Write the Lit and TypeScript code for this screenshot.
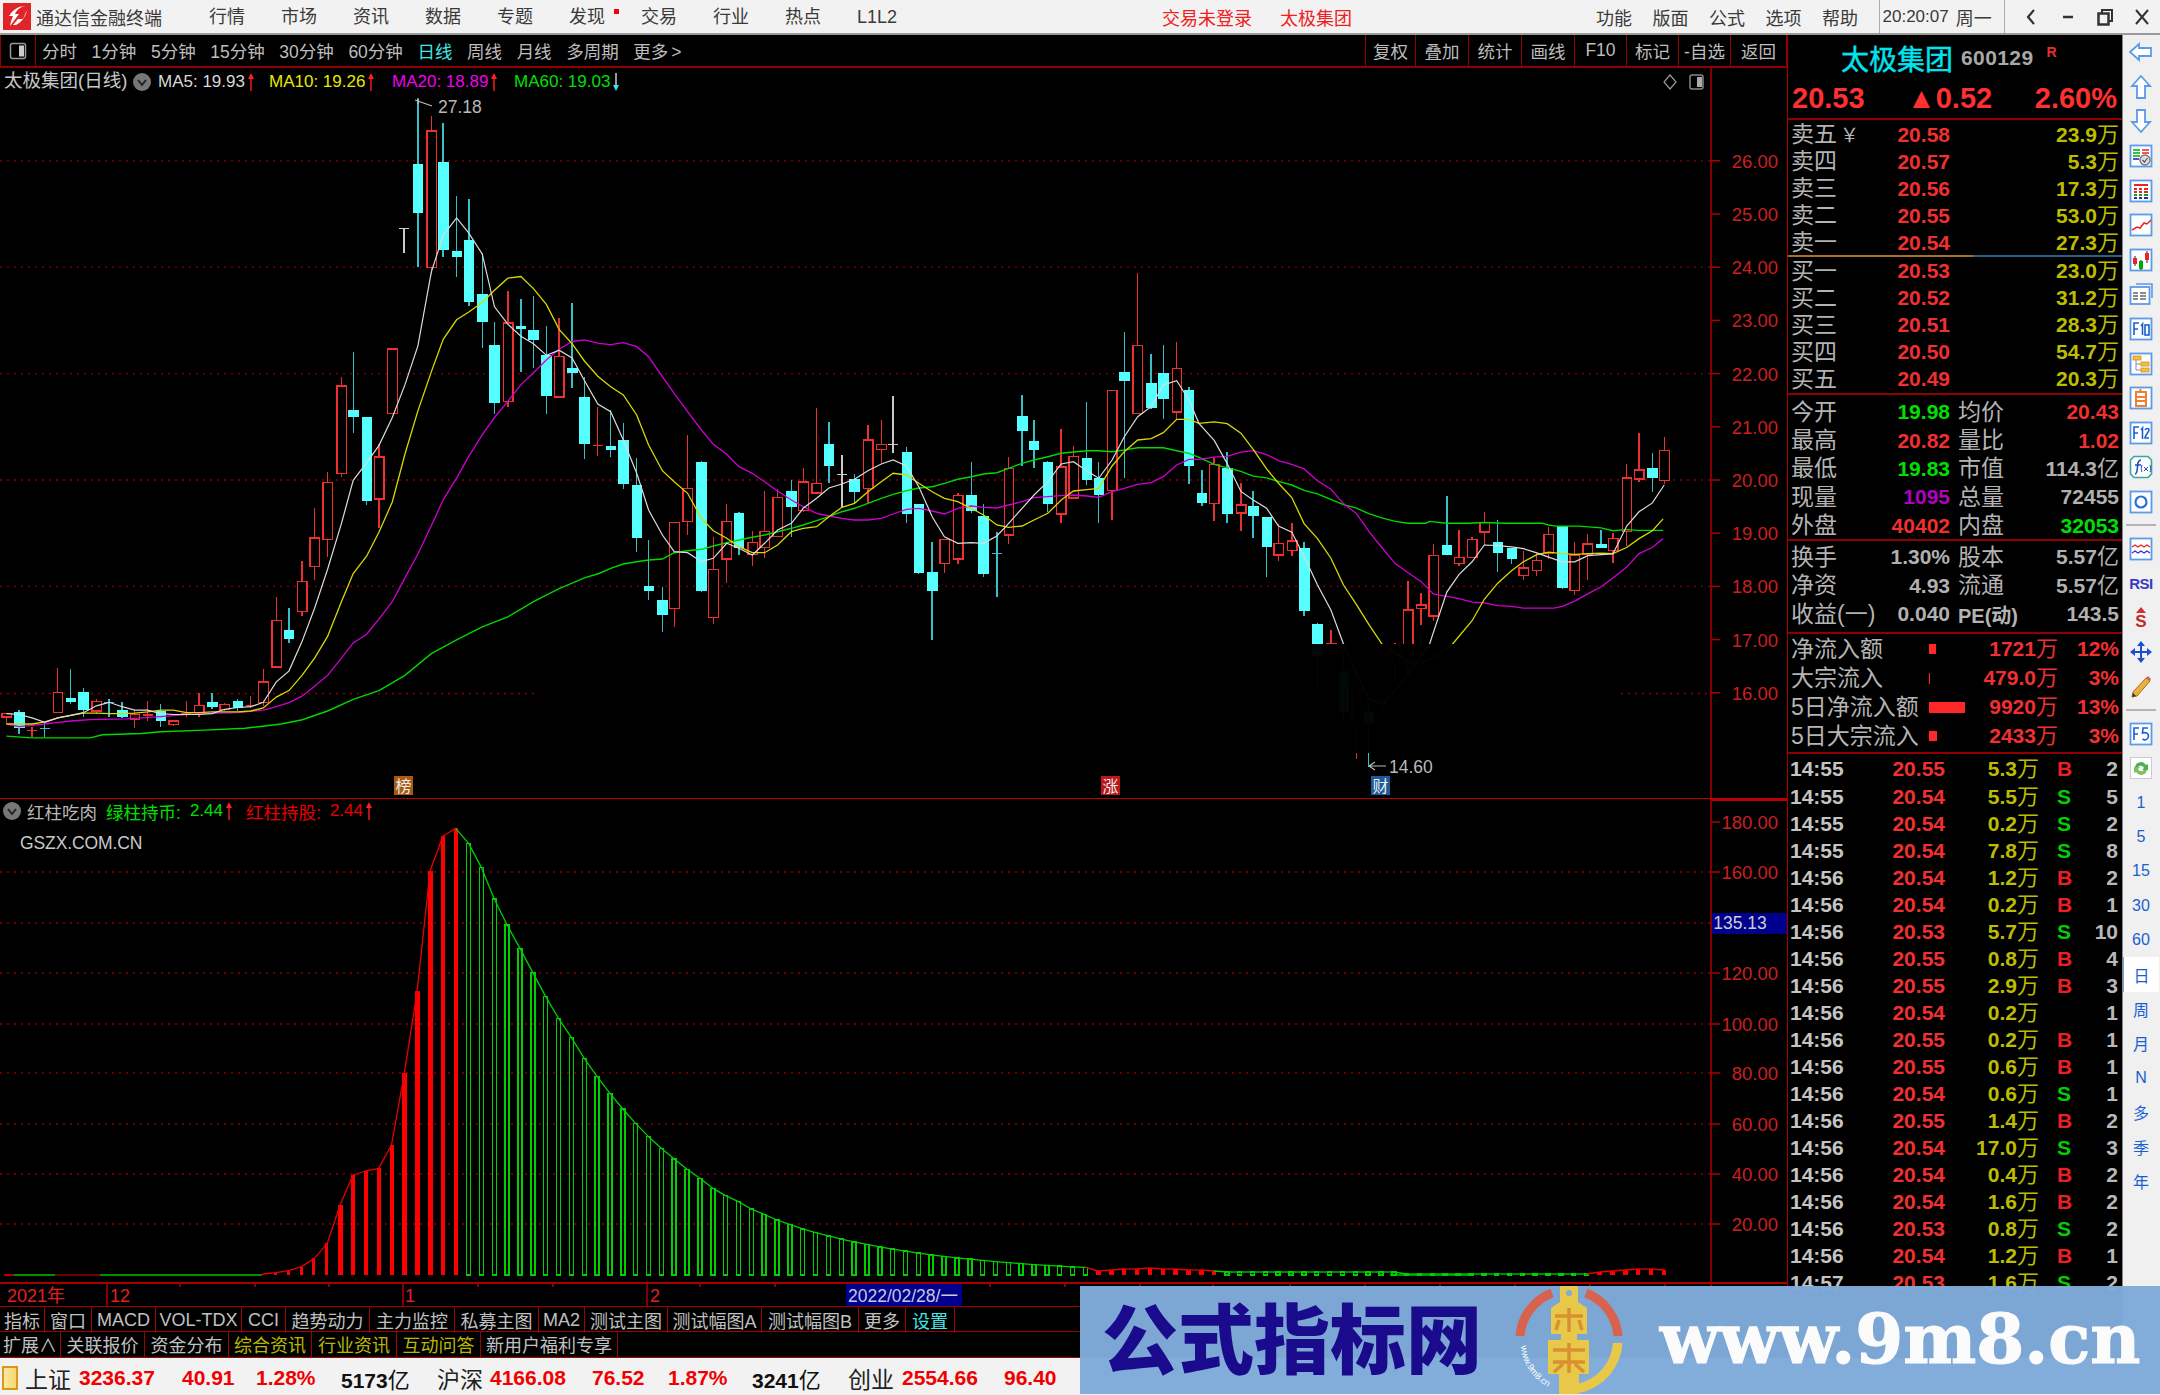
import { LitElement, html, css, svg } from "lit";
import { customElement } from "lit/decorators.js";

type C = [number, number, number, number, number, string];
const RED = "r", CY = "c", GR = "g";

const z7 = (x: number) => x / 2.613;
const y7 = (y: number) => 90 + y / 2.306;
const z8 = (x: number) => 600 + x / 2.613;
const y8 = (y: number) => 260 + y / 3;
const z9 = (x: number) => 1200 + x / 2.613;
const y9 = (y: number) => 260 + y / 2.8;

const c7: C[] = [
  [17,1438,1438,1446,1462,RED],[50,1430,1434,1472,1484,CY],[84,1468,1474,1476,1492,RED],[117,1460,1470,1472,1492,CY],
  [151,1332,1389,1435,1435,RED],[185,1336,1402,1412,1415,CY],[218,1378,1388,1430,1445,CY],[252,1405,1410,1432,1440,RED],
  [285,1405,1410,1416,1445,CY],[319,1412,1430,1446,1448,CY],[352,1430,1440,1452,1472,RED],[386,1410,1439,1441,1455,RED],
  [420,1415,1432,1455,1470,CY],[453,1453,1455,1463,1466,RED],[487,1410,1436,1438,1445,RED],[520,1390,1420,1436,1445,RED],
  [554,1390,1412,1422,1428,CY],[587,1414,1417,1428,1432,RED],[621,1404,1410,1424,1432,CY],[655,1398,1417,1419,1425,RED],
  [688,1336,1365,1412,1420,RED],[722,1170,1223,1331,1334,RED],[755,1194,1246,1266,1276,CY],[789,1087,1133,1203,1214,RED],
  [822,963,1033,1099,1131,RED],[856,880,905,1036,1076,RED],[892,661,683,885,892,RED],[923,605,737,753,792,CY],
  [958,755,755,948,958,CY],[990,817,846,943,1010,RED],[1025,597,597,746,746,RED],[1056,320,320,321,375,GR],
  [1092,20,170,283,408,CY],[1127,60,95,410,425,RED],[1158,77,167,370,385,CY],[1193,245,371,384,432,CY],
  [1225,252,347,490,498,CY],[1260,375,471,535,595,CY],[1292,534,589,722,747,CY],[1327,463,537,718,732,RED],
  [1361,482,544,552,650,CY],[1394,474,554,577,640,CY],[1428,544,612,705,747,CY],[1461,526,614,708,708,RED],
  [1495,492,641,653,688,CY],[1527,662,707,816,850,CY],[1562,731,817,819,845,RED],
];
const c8: C[] = [
  [28,450,557,569,592,CY],[61,490,540,673,687,CY],[96,593,675,835,876,CY],[127,840,977,993,1020,CY],[163,980,1021,1065,1115,CY],
  [194,788,788,1045,1100,RED],[229,525,685,784,826,RED],[265,602,607,993,997,CY],[296,830,928,1073,1092,RED],[331,733,784,897,970,RED],
  [363,755,760,865,885,CY],[398,813,848,884,917,RED],[430,693,815,862,893,RED],[464,688,712,830,830,RED],[500,660,692,740,830,CY],
  [531,625,666,752,755,RED],[566,445,671,699,700,RED],[598,485,553,619,670,CY],[632,585,644,646,740,GR],[665,643,656,696,730,CY],
  [700,494,540,686,730,RED],[735,480,553,569,610,RED],[766,408,553,555,580,GR],[801,562,575,763,790,CY],[833,733,733,940,943,CY],
  [868,845,935,993,1140,CY],[900,838,838,910,940,RED],[935,698,707,897,912,RED],[970,606,706,753,760,CY],[1002,733,768,943,952,CY],
  [1037,815,877,879,1012,CY],[1068,590,626,825,853,RED],[1103,404,467,512,618,CY],[1134,480,544,570,623,CY],[1170,603,607,732,755,CY],
  [1205,508,621,762,790,RED],[1237,558,590,714,718,RED],[1272,427,593,660,675,CY],[1303,607,653,705,790,CY],[1338,392,392,692,780,RED],
  [1370,215,337,363,655,CY],[1405,40,257,460,462,RED],[1440,282,368,444,446,CY],[1472,256,338,416,476,CY],[1507,247,325,456,480,RED],
  [1539,382,391,619,672,CY],
];
const c9: C[] = [
  [5,587,652,680,690,CY],[37,553,572,681,730,RED],[71,538,583,712,735,CY],[107,625,686,708,760,RED],[139,647,690,716,777,CY],
  [174,719,719,804,888,CY],[205,740,794,826,843,RED],[240,735,787,813,830,RED],[272,790,805,982,998,CY],[307,1016,1019,1110,1200,CY],
  [342,1037,1075,1100,1120,RED],[375,1100,1150,1265,1290,CY],[409,1150,1200,1300,1396,RED],[441,1240,1265,1300,1420,CY],
  [475,1080,1100,1230,1320,RED],[510,1073,1080,1130,1180,RED],[543,900,980,1125,1160,RED],[577,932,966,976,1022,RED],
  [610,795,828,997,1012,RED],[645,660,798,826,826,CY],[677,755,833,850,856,RED],[711,775,782,833,835,RED],[743,705,735,762,800,RED],
  [778,727,790,820,873,CY],[814,805,805,837,850,CY],[845,815,862,883,897,RED],[880,820,841,870,885,RED],[911,748,769,820,838,RED],
  [947,745,745,918,922,CY],[979,790,826,925,938,RED],[1013,768,795,825,897,RED],[1048,755,794,805,805,CY],[1079,765,780,813,848,RED],
  [1115,570,610,761,800,RED],[1147,483,588,613,622,RED],[1182,541,583,610,650,CY],[1213,495,534,618,628,RED],
];
const candles: { x: number; a: number; b: number; c: number; d: number; t: string }[] = [
  ...c7.map((k) => ({ x: z7(k[0]), a: y7(k[1]), b: y7(k[2]), c: y7(k[3]), d: y7(k[4]), t: k[5] })),
  ...c8.map((k) => ({ x: z8(k[0]), a: y8(k[1]), b: y8(k[2]), c: y8(k[3]), d: y8(k[4]), t: k[5] })),
  ...c9.map((k) => ({ x: z9(k[0]), a: y9(k[1]), b: y9(k[2]), c: y9(k[3]), d: y9(k[4]), t: k[5] })),
];

const line = (a7: number[], a8: number[], a9: number[]) => {
  const out: string[] = [];
  for (let i = 0; i < a7.length; i += 2) out.push(`${z7(a7[i]).toFixed(1)},${y7(a7[i + 1]).toFixed(1)}`);
  for (let i = 0; i < a8.length; i += 2) out.push(`${z8(a8[i]).toFixed(1)},${y8(a8[i + 1]).toFixed(1)}`);
  for (let i = 0; i < a9.length; i += 2) out.push(`${z9(a9[i]).toFixed(1)},${y9(a9[i + 1]).toFixed(1)}`);
  return out.join(" ");
};

const ma5 = line(
  [17,1438,50,1440,84,1448,117,1458,151,1448,185,1442,218,1436,252,1420,285,1412,319,1422,352,1430,386,1430,420,1438,453,1440,487,1440,520,1440,554,1438,587,1428,621,1424,655,1422,688,1412,722,1365,755,1340,789,1272,822,1195,856,1105,892,1000,923,900,958,860,990,820,1025,755,1058,680,1092,590,1127,420,1158,335,1193,295,1225,330,1260,378,1292,500,1327,540,1361,568,1394,585,1428,612,1461,600,1495,618,1527,670,1562,724],
  [28,455,61,540,96,640,127,750,163,825,194,875,229,878,265,905,296,895,331,850,363,865,398,885,430,850,464,810,500,790,531,745,566,715,598,684,632,672,665,658,700,632,735,612,766,600,801,618,833,680,868,770,900,830,935,850,970,848,1002,850,1037,828,1068,790,1103,745,1134,705,1170,665,1205,612,1237,605,1272,632,1303,655,1338,600,1370,530,1405,470,1440,440,1472,375,1507,362,1539,420,1565,490],
  [37,505,71,570,107,648,139,672,174,695,205,745,240,762,272,830,307,910,342,980,375,1075,440,1230,480,1245,540,1165,600,1075,645,930,677,880,711,845,743,798,778,800,814,803,845,808,880,820,911,832,947,845,979,845,1013,828,1048,825,1079,823,1115,745,1147,705,1182,680,1213,630]
);
const ma10 = line(
  [17,1462,50,1462,84,1462,117,1457,151,1448,185,1442,218,1437,252,1437,285,1438,319,1438,352,1437,386,1434,420,1430,453,1430,487,1436,520,1436,554,1434,587,1434,621,1434,655,1432,688,1425,722,1400,755,1385,789,1350,822,1310,856,1260,892,1180,923,1115,958,1075,990,1020,1025,950,1058,840,1092,740,1127,650,1158,575,1193,530,1225,512,1260,490,1292,462,1327,434,1361,430,1394,458,1428,495,1461,552,1495,585,1527,625,1562,660],
  [28,380,61,405,96,465,127,555,163,632,194,665,229,700,265,775,296,812,331,835,363,860,398,878,430,878,464,855,500,815,531,805,566,800,598,770,632,742,665,730,700,695,735,665,766,640,801,645,833,670,868,695,900,715,935,725,970,745,1002,765,1037,795,1068,802,1103,798,1134,780,1170,760,1205,720,1237,693,1272,689,1303,685,1338,618,1370,575,1405,540,1440,536,1472,518,1507,478,1539,478,1565,490],
  [37,453,71,458,107,485,139,530,174,585,205,625,240,665,272,738,307,780,342,835,375,910,409,965,441,1020,475,1075,510,1100,560,1135,610,1115,660,1075,711,1010,743,950,778,905,814,870,845,845,880,825,911,818,947,822,979,824,1013,822,1048,821,1079,822,1115,805,1147,780,1182,758,1210,725]
);
const ma20 = line(
  [17,1462,50,1468,117,1462,151,1458,185,1455,235,1452,330,1450,420,1445,520,1438,621,1436,688,1430,722,1422,755,1413,789,1398,822,1375,856,1350,892,1310,923,1275,958,1255,990,1220,1025,1180,1058,1125,1092,1070,1127,1005,1158,945,1193,895,1225,845,1260,795,1292,755,1327,718,1361,680,1394,652,1428,622,1461,598,1495,580,1527,576,1565,584],
  [28,254,61,248,96,260,127,290,163,350,194,400,229,455,265,510,296,553,331,583,363,620,398,640,430,665,464,693,500,720,531,740,566,760,598,768,632,775,665,780,700,780,735,775,766,762,801,748,833,745,868,753,900,762,935,745,970,738,1002,742,1037,744,1068,735,1103,725,1134,713,1170,710,1205,707,1237,705,1272,708,1303,712,1338,695,1370,685,1405,673,1440,668,1472,650,1507,615,1539,598,1565,598],
  [37,552,71,550,107,538,139,534,174,545,205,562,240,572,272,585,307,618,342,642,375,682,409,710,441,760,475,805,510,850,543,875,577,900,610,935,645,942,677,948,711,958,743,960,778,968,814,970,845,975,880,975,925,975,947,970,979,955,1013,935,1048,915,1079,890,1115,860,1147,822,1182,805,1210,780]
);
const ma60 = line(
  [17,1490,84,1494,235,1494,268,1487,370,1484,420,1480,535,1476,640,1472,735,1462,790,1452,856,1432,923,1405,990,1385,1058,1350,1127,1300,1193,1268,1260,1238,1327,1215,1394,1180,1461,1150,1527,1125,1565,1115],
  [28,925,61,912,96,905,127,900,163,897,194,878,229,872,265,868,296,858,331,848,363,840,398,832,430,825,464,815,500,805,531,795,566,782,598,770,632,755,665,745,700,730,735,715,766,703,801,692,833,684,868,680,900,670,935,658,970,650,1002,642,1037,638,1068,625,1103,610,1134,600,1170,590,1205,580,1237,576,1272,572,1303,572,1338,575,1370,570,1405,563,1440,563,1472,563,1507,572,1539,580,1565,592],
  [37,572,71,582,107,592,139,605,174,610,205,620,240,630,272,645,307,655,342,670,375,685,409,695,441,710,475,722,510,732,543,737,590,737,600,732,645,737,700,737,743,735,800,737,895,737,910,742,930,745,990,745,1048,750,1079,758,1115,755,1147,757,1182,757,1210,757]
);

const BASE = 1274;
const topsZ: Record<number, number> = {
  20:1447,21:1443,22:1437,23:1425,24:1400,25:1355,26:1240,27:1150,28:1138,29:1130,30:1060,31:845,32:597,33:238,34:133,35:110,
  36:155,37:228,38:322,39:400,40:470,41:543,42:615,43:680,44:738,45:800,46:855,47:905,48:952,49:995,50:1035,51:1070,52:1102,53:1133,54:1160,55:1190,56:1212,57:1230,58:1252,59:1268,60:1285,61:1298,
};
const bars: { x: number; top: number; red: boolean }[] = [];
for (let i = 20; i <= 129; i++) {
  const x = 6 + 12.85 * i;
  let h: number;
  let red = i <= 35;
  if (topsZ[i] !== undefined) h = (1450 - topsZ[i]) / 3;
  else if (i <= 84) h = Math.max(3, 50 * Math.pow(0.921, i - 61));
  else if (i <= 94) { h = [4, 5, 6, 6, 7, 6, 6, 5, 5, 4][i - 85]; red = true; }
  else if (i <= 108) h = 3;
  else if (i <= 123) h = 1;
  else { h = [3, 4, 5, 6, 6, 5][i - 124]; red = true; }
  bars.push({ x, top: BASE - h, red });
}

const upAxis = [26, 25, 24, 23, 22, 21, 20, 19, 18, 17, 16];
const lowAxis: [string, number][] = [["180.00",821],["160.00",871],["120.00",972],["100.00",1023],["80.00",1072],["60.00",1123],["40.00",1173],["20.00",1223]];

const sells = [["卖五","20.58","23.9"],["卖四","20.57","5.3"],["卖三","20.56","17.3"],["卖二","20.55","53.0"],["卖一","20.54","27.3"]];
const buys = [["买一","20.53","23.0"],["买二","20.52","31.2"],["买三","20.51","28.3"],["买四","20.50","54.7"],["买五","20.49","20.3"]];
const ticks: string[][] = [
  ["14:55","20.55","5.3","B","2"],["14:55","20.54","5.5","S","5"],["14:55","20.54","0.2","S","2"],["14:55","20.54","7.8","S","8"],
  ["14:56","20.54","1.2","B","2"],["14:56","20.54","0.2","B","1"],["14:56","20.53","5.7","S","10"],["14:56","20.55","0.8","B","4"],
  ["14:56","20.55","2.9","B","3"],["14:56","20.54","0.2","","1"],["14:56","20.55","0.2","B","1"],["14:56","20.55","0.6","B","1"],
  ["14:56","20.54","0.6","S","1"],["14:56","20.55","1.4","B","2"],["14:56","20.54","17.0","S","3"],["14:56","20.54","0.4","B","2"],
  ["14:56","20.54","1.6","B","2"],["14:56","20.53","0.8","S","2"],["14:56","20.54","1.2","B","1"],["14:57","20.53","1.6","S","2"],
];

const up = (c: string) => html`<svg class="arr" viewBox="0 0 8 18"><path d="M4 18V3" stroke="${c}" stroke-width="1.4"/><path d="M1 6 4 0l3 6z" fill="${c}"/></svg>`;
const down = html`<svg class="arr" viewBox="0 0 8 18"><path d="M4 0v14" stroke="#d8d8d8" stroke-width="1.4"/><path d="M1 12l3 6 3-6z" fill="#40e0f0"/></svg>`;
const chev = html`<svg class="chev" viewBox="0 0 18 18"><circle cx="9" cy="9" r="9" fill="#777"/><path d="M5 7l4 5 4-5" fill="none" stroke="#222" stroke-width="2"/></svg>`;

const B = "#5b9bea";
const box = (inner: unknown) => html`<svg class="ic" viewBox="0 0 24 24"><rect x="1.5" y="1.5" width="21" height="21" fill="#fff" stroke="${B}" stroke-width="1.8"/>${inner}</svg>`;
const icons = [
  html`<svg class="ic" viewBox="0 0 24 24"><path d="M1 12 10 4v4h12v8H10v4z" fill="#fff" stroke="${B}" stroke-width="1.8"/></svg>`,
  html`<svg class="ic" viewBox="0 0 24 24"><path d="M12 1l9 10h-5v12H8V11H3z" fill="#fff" stroke="${B}" stroke-width="1.8"/></svg>`,
  html`<svg class="ic" viewBox="0 0 24 24"><path d="M12 23 3 13h5V1h8v12h5z" fill="#fff" stroke="${B}" stroke-width="1.8"/></svg>`,
  box(svg`<path d="M4 6h7M4 9h7M4 12h7" stroke="#0a0" stroke-width="1.6"/><path d="M13 6h7M13 9h7" stroke="#e22" stroke-width="1.6"/><path d="M4 15h6" stroke="#22c" stroke-width="1.6"/><circle cx="16" cy="16" r="5" fill="#ddd" stroke="#777" stroke-width="1.4"/><path d="M13.5 16l2 2 3-4" fill="none" stroke="#555" stroke-width="1.2"/>`),
  box(svg`<path d="M5 6h14" stroke="#e22" stroke-width="2"/><path d="M5 10h3M10 10h3M15 10h4M5 13h3M10 13h3M15 13h4" stroke="#e22" stroke-width="2"/><path d="M5 16h3M10 16h3M15 16h4" stroke="#0a0" stroke-width="2"/><path d="M5 19h3M10 19h3M15 19h4" stroke="#22c" stroke-width="2"/>`),
  box(svg`<path d="M3 17l5-3 3 1 4-5 3 1 4-4" fill="none" stroke="#e22" stroke-width="1.5"/>`),
  box(svg`<path d="M6 8v10M12 12v10M18 3v12" stroke="#222" stroke-width="1"/><rect x="4" y="10" width="4" height="6" fill="#e22"/><rect x="10" y="13" width="4" height="8" fill="#0a0"/><rect x="16" y="5" width="4" height="7" fill="#e22"/>`),
  html`<svg class="ic" viewBox="0 0 24 24"><path d="M7 2h16v14" fill="none" stroke="${B}" stroke-width="1.6"/><rect x="1.5" y="5" width="19" height="17" fill="#fff" stroke="${B}" stroke-width="1.8"/><path d="M4 11h5M11 11h6M4 14h5M11 14h6M4 17h5M11 17h6" stroke="#666" stroke-width="1.3"/></svg>`,
  box(svg`<path d="M5 18V6h5M5 12h4M12 9l1.5-2v11" fill="none" stroke="#1a5fd0" stroke-width="1.6"/><rect x="16" y="8" width="4" height="10" fill="none" stroke="#1a5fd0" stroke-width="1.6"/>`),
  box(svg`<rect x="4" y="4" width="8" height="4" fill="#f0c040" stroke="#d09020" stroke-width=".8"/><path d="M7 8v10h5M7 12h5" fill="none" stroke="#88a" stroke-width="1"/><rect x="12" y="10" width="8" height="4" fill="#f0c040" stroke="#d09020" stroke-width=".8"/><rect x="12" y="16" width="8" height="4" fill="#f0c040" stroke="#d09020" stroke-width=".8"/>`),
  box(svg`<path d="M12 3l-1.5 3H7v14h10V6h-6M7 11h10M7 15h10" fill="none" stroke="#f08030" stroke-width="2"/>`),
  box(svg`<path d="M5 18V6h5M5 12h4M12 9l1.5-2v11" fill="none" stroke="#1a5fd0" stroke-width="1.6"/><path d="M16 9c1-2 4-2 4 0s-4 5-4 8h4" fill="none" stroke="#1a5fd0" stroke-width="1.6"/>`),
  html`<svg class="ic" viewBox="0 0 24 24"><path d="M5 1.5h14L22.5 5v14L19 22.5H5L1.5 19V5z" fill="#fff" stroke="#3aa6a0" stroke-width="1.6"/><path d="M6 19c3 0 2-8 3-11s2-3 3-3M6 10h6" fill="none" stroke="#1a4fc0" stroke-width="1.6"/><path d="M13 10c-1 3-1 5 0 7M21 10c1 3 1 5 0 7M15 12l4 4M19 12l-4 4" fill="none" stroke="#1a4fc0" stroke-width="1"/></svg>`,
  box(svg`<circle cx="12" cy="12" r="5.5" fill="none" stroke="#2a70d8" stroke-width="2.2"/>`),
];
const icons2 = [
  box(svg`<path d="M3 10l3-2 3 2 3-2 3 2 3-2 3 2" fill="none" stroke="#e22" stroke-width="1.4"/><path d="M3 16l3-2 3 2 3-2 3 2 3-2 3 2" fill="none" stroke="#33d" stroke-width="1.4"/>`),
  html`<span class="rsi">RSI</span>`,
  html`<svg class="ic" viewBox="0 0 24 24"><path d="M12 1l5 6H7z" fill="#d43030"/><text x="12" y="21" text-anchor="middle" font-size="17" font-weight="700" fill="#c02828" font-family="Liberation Sans">S</text></svg>`,
  html`<svg class="ic" viewBox="0 0 24 24"><path d="M12 1l4 5h-3v5h5V8l5 4-5 4v-3h-5v5h3l-4 5-4-5h3v-5H6v3l-5-4 5-4v3h5V6H8z" fill="#1a50d0"/></svg>`,
  html`<svg class="ic" viewBox="0 0 24 24"><path d="M4 17 17 3l4 3L8 21l-5 1z" fill="#f0b040" stroke="#a07020" stroke-width="1"/><path d="M17 3l4 3 1-2-3-3z" fill="#d86050"/><path d="M3 22l1-4 3 3z" fill="#333"/></svg>`,
];
const icons3 = [
  box(svg`<path d="M5 18V6h5M5 12h4" fill="none" stroke="#1a5fd0" stroke-width="1.6"/><path d="M19 6h-5l-.5 5c3-1 6 0 6 3s-3 5-6 3" fill="none" stroke="#1a5fd0" stroke-width="1.6"/>`),
  html`<svg class="ic" viewBox="0 0 24 24"><rect x="1.5" y="1.5" width="21" height="21" fill="#fff" stroke="#ccc"/><path d="M6 11a6 6 0 0 1 11-2l2-1v6h-6l2-2a3.500 3.500 0 0 0-6-1z" fill="#50b050"/><path d="M18 14a6 6 0 0 1-11 2l-2 1v-6h6l-2 2a3.500 3.500 0 0 0 6 1z" fill="#80c060"/></svg>`,
];
const periods = ["1", "5", "15", "30", "60", "日", "周", "月", "N", "多", "季", "年"];

@customElement("app-root")
export class AppRoot extends LitElement {
  static styles = css`
    :host { display: block; width: 2160px; height: 1395px; position: relative; overflow: hidden; background: #000;
      font-family: "Liberation Sans", "Noto Sans CJK SC", sans-serif; }
    * { box-sizing: border-box; }
    svg { display: block; }

    .titlebar { height: 35px; background: #f2f2f2; border-bottom: 2px solid #9a9a9a; display: flex; align-items: center; color: #3a3a3a; font-size: 18px; white-space: nowrap; }
    .logo { width: 36px; padding-left: 3px; flex: none; }
    .logo svg { width: 28px; height: 27px; }
    .brand { width: 173px; flex: none; }
    .menu { display: grid; grid-template-columns: repeat(10, 72px); flex: none; align-items: center; }
    .menu span { position: relative; line-height: 26px; }
    .dot { position: absolute; left: 45px; top: 5px; width: 5px; height: 5px; background: #f00010; }
    .notice { color: #f02020; margin-left: 233px; width: 118px; flex: none; }
    .notice2 { color: #f02020; flex: none; width: 316px; }
    .sys { display: grid; grid-template-columns: repeat(5, 56.500px); flex: none; }
    .clock { flex: none; border-left: 1px solid #aaa; border-right: 1px solid #aaa; height: 33px; width: 126px; padding-left: 3px; display: flex; align-items: center; gap: 7px; font-size: 17px; }
    .clock span + span { font-size: 18px; }
    .win { flex: 1; display: grid; grid-template-columns: 37px 37px 37px 37px; padding-left: 8px; align-items: center; justify-items: center; }
    .win svg { width: 18px; height: 18px; }

    .body { display: grid; grid-template-columns: 1787px 336px 37px; height: 1323px; }
    .left { display: flex; flex-direction: column; min-width: 0; }
    .tools { height: 33px; flex: none; display: flex; align-items: center; border-bottom: 2px solid #900000; color: #bdbdbd; font-size: 17.500px; white-space: nowrap; }
    .tool-ic { width: 36px; height: 31px; border-right: 1px solid #900000; border-left: 1px solid #900000; display: flex; align-items: center; justify-content: center; flex: none; }
    .tool-ic svg { width: 18px; height: 18px; }
    .periods { display: flex; gap: 14.600px; padding-left: 6px; align-items: center; }
    .on { color: #40e8e8; }
    .gt { margin-left: 3px; }
    .right-tools { margin-left: auto; display: grid; grid-template-columns: 50px 53px 53px 53px 52px 52px 52px 56px; height: 31px; border-left: 1px solid #900000; flex: none; }
    .right-tools span { display: flex; align-items: center; justify-content: center; border-right: 1px solid #900000; }

    .upper { position: relative; height: 730px; flex: none; }
    .upper > svg { width: 1787px; height: 730px; }
    .legend { position: absolute; left: 4px; top: 2px; display: flex; align-items: center; height: 24px; font-size: 17px; color: #d8d8d8; white-space: nowrap; }
    .legend .nm { font-size: 18.500px; color: #c8c8c8; width: 129px; line-height: 22px; margin-top: -2px; }
    .chev { width: 18px; height: 18px; flex: none; }
    .arr { width: 8px; height: 18px; margin-left: 2px; flex: none; }
    .m5 { margin-left: 7px; width: 111px; display: flex; align-items: center; }
    .m10 { width: 123px; display: flex; align-items: center; color: #e8e800; }
    .m20 { width: 122px; display: flex; align-items: center; color: #f000f0; }
    .m60 { display: flex; align-items: center; color: #00e000; }
    .lower { position: relative; height: 484px; flex: none; border-top: 1px solid #c00000; }
    .lower > svg { width: 1787px; height: 483px; }
    .legend2 { position: absolute; left: 3px; top: 0; height: 24px; display: flex; align-items: center; font-size: 17px; color: #b8b8b8; white-space: nowrap; }
    .legend2 .n2 { margin-left: 6px; width: 79px; font-size: 17.500px; }
    .g { color: #00e000; display: flex; align-items: center; width: 140px; font-size: 17.500px; }
    .rd { color: #e80000; display: flex; align-items: center; font-size: 17.500px; }
    .vv { margin-left: 9px; font-size: 17px; }
    .site { position: absolute; left: 20px; top: 34px; font-size: 17.500px; color: #c8c8c8; letter-spacing: -.1px; }

    .axis { height: 24px; flex: none; border-top: 2px solid #a80000; }
    .axis svg { width: 1787px; height: 22px; }
    .tabs { flex: none; display: grid; border-top: 1.500px solid #a00000; font-size: 18px; color: #c0c0c0; white-space: nowrap; }
    .tabs span { display: flex; align-items: center; justify-content: center; border-right: 1px solid #a00000; }
    .t1 { grid-template-columns: 45px 47px 64px 86px 44px 84px 85px 84px 46px 83px 94px 97px 47px 49px; height: 25px; }
    .t2 { grid-template-columns: 61px 84px 84px 83px 85px 84px 137px; height: 27px; border-bottom: 1.500px solid #a00000; }
    .t2 span { padding-top: 3px; line-height: 1; }
    .tabs .gold { color: #b8b800; }
    .tabs .cy { color: #40e8e8; }

    .panel { border-left: 1px solid #a00000; border-right: 1px solid #8a8a8a; color: #c4c4c4; font-size: 21px; overflow: hidden; }
    .nm-row { height: 44px; display: flex; align-items: center; padding-left: 53px; white-space: nowrap; padding-top: 2px; }
    .big-nm { font-size: 28px; color: #00e4f0; width: 120px; flex: none; -webkit-text-stroke: .4px #00e4f0; }
    .code { font-size: 21px; font-weight: 700; color: #a8a8a8; letter-spacing: .4px; }
    .rr { color: #e03030; font-size: 14px; font-weight: 700; margin-left: 13px; align-self: flex-start; margin-top: 7px; }
    .px-row { height: 41px; display: grid; grid-template-columns: 115px 90px 120px; align-items: center; padding-left: 4px; border-bottom: 2px solid #900000; color: #ff3030; font-weight: 700; font-size: 29px; white-space: nowrap; }
    .px-row span:nth-child(3) { text-align: right; }
    .orders { display: grid; grid-auto-rows: 27.100px; }
    .ord { display: grid; grid-template-columns: 60px 99px 169px; align-items: center; padding-left: 3px; }
    .sell .ord { padding-top: 2px; }
    .lab { font-size: 23px; color: #b4b4b4; white-space: nowrap; line-height: 1; position: relative; font-weight: 400; }
    .yen { font-size: 19px; margin-left: 3px; }
    .pr { color: #f03030; font-weight: 700; text-align: right; }
    .vol { color: #bcbc00; font-weight: 700; text-align: right; white-space: nowrap; }
    .wan { font-size: 22px; font-weight: 400; line-height: 1; }
    .split { display: grid; grid-template-columns: 185px 1fr; height: 2px; }
    .split i { background: #a87020; }
    .split b { background: #28608c; }
    .sec { border-top: 2px solid #900000; display: grid; }
    .s5 { padding-top: 3px; grid-auto-rows: 28.400px; height: 146px; }
    .s3 { padding-top: 2px; grid-auto-rows: 28.500px; height: 93px; }
    .s4 { padding-top: 1px; grid-auto-rows: 28.900px; height: 120px; }
    .stat { display: grid; grid-template-columns: 60px 99px 8px 49px 112px; align-items: center; padding-left: 3px; white-space: nowrap; }
    .stat .v { text-align: right; font-weight: 700; }
    .stat .v2 { text-align: right; font-weight: 700; }
    .sp { display: block; }
    .green { color: #00e000; }
    .redt { color: #f03030; }
    .pur { color: #b000c0; }
    .gry { color: #b0b0b0; }
    .ppe { font-size: 20px; font-weight: 700; color: #b4b4b4; }
    .flow { display: grid; grid-template-columns: 138px 37px 92px 61px; align-items: center; padding-left: 3px; white-space: nowrap; color: #f03030; font-weight: 700; }
    .flow .r { text-align: right; }
    .fb { height: 11px; background: #ff2828; }
    .fb.a { width: 7px; height: 10px; }
    .fb.b { width: 1px; }
    .fb.c { width: 36px; }
    .fb.d { width: 8px; height: 10px; }
    .ticks { display: grid; grid-auto-rows: 27.050px; padding-top: 2px; }
    .tick { display: grid; grid-template-columns: 64px 91px 94px 38px 41px; align-items: center; padding-left: 2px; white-space: nowrap; font-weight: 700; }
    .tick .t { color: #c4c4c4; }
    .tick .p { color: #f03030; text-align: right; }
    .tick .vl { color: #bcbc00; text-align: right; }
    .tick .sd { padding-left: 18px; }
    .sd.B { color: #e82020; }
    .sd.S { color: #00d000; }
    .tick .n { text-align: right; color: #b8b8b8; }

    .rail { background: #f0f0f0; display: flex; flex-direction: column; align-items: center; padding-right: 1px; }
    .cell { height: 34.600px; flex: none; display: flex; align-items: center; justify-content: center; width: 100%; }
    .ic { width: 24px; height: 24px; }
    .sep { height: 12px; flex: none; width: 100%; display: flex; align-items: center; }
    .sep i { display: block; height: 2px; width: 30px; background: #b4b4b4; margin: 0 auto; }
    .rsi { color: #3a3ac0; font-weight: 700; font-size: 15px; letter-spacing: -.5px; }
    .per { height: 34.400px; flex: none; display: flex; align-items: center; justify-content: center; width: 100%; color: #1860d0; font-size: 16px; }
    .per.sel { background: #fff; border-left: 1px solid #7aa0d8; }

    .status { height: 37px; background: #f2f2f2; display: grid; align-items: center; font-size: 21px; color: #f00000; white-space: nowrap; font-weight: 700; padding-top: 2px;
      grid-template-columns: 25px 54px 103px 74px 85px 96px 53px 102px 76px 84px 96px 54px 102px 80px 1fr; }
    .sq { display: block; width: 16px; height: 24px; margin-left: 2px; background: linear-gradient(90deg, #f8e8a0, #f8d870); border: 2px solid #d89820; }
    .sq-wrap { display: flex; align-items: center; }
    .st-n { color: #222; font-size: 23px; font-weight: 400; }
    .st-k { color: #111; }
    .wa { font-size: 22px; font-weight: 400; }

    .wm { position: absolute; left: 1080px; top: 1286px; width: 1080px; height: 108px; background: rgba(127, 171, 217, .975); display: flex; align-items: center; }
    .wm-t { color: #1a0a8c; font-size: 76px; font-weight: 900; font-family: "Noto Sans CJK SC", sans-serif; line-height: 1; margin-left: 22px; width: 413px; flex: none; white-space: nowrap; padding-bottom: 10px; }
    .wm svg { width: 108px; height: 108px; flex: none; }
    .wm-u { color: #fbfbfb; font-family: "DejaVu Serif", serif; font-weight: 700; font-size: 69px; margin-left: 37px; white-space: nowrap; line-height: 1; -webkit-text-stroke: 1.200px #fbfbfb; padding-bottom: 3px; }
  `;

  private renderCandles() {
    return candles.map((k) => {
      if (k.t === GR) {
        return svg`<path d="M${k.x - 5} ${k.b}h10M${k.x} ${k.a}V${k.d}" stroke="#c8c8c8" stroke-width="1.300" fill="none" shape-rendering="crispEdges"/>`;
      }
      const col = k.t === RED ? "#e83030" : "#38c0c8";
      if (k.c - k.b < 3) {
        return svg`<path d="M${k.x - 5} ${k.b + 1}h10M${k.x} ${k.a}V${k.d}" stroke="${col}" stroke-width="1.300" fill="none" shape-rendering="crispEdges"/>`;
      }
      return svg`<path d="M${k.x} ${k.a}V${k.b}M${k.x} ${k.c}V${k.d}" stroke="${col}" stroke-width="1.400" shape-rendering="crispEdges"/>
        ${k.t === RED
          ? svg`<rect x="${k.x - 4.5}" y="${k.b}" width="9.500" height="${k.c - k.b}" fill="#000" stroke="#ee3030" stroke-width="1.400" shape-rendering="crispEdges"/>`
          : svg`<rect x="${k.x - 5}" y="${k.b}" width="10.500" height="${k.c - k.b}" fill="#55ffff" shape-rendering="crispEdges"/>`}`;
    });
  }

  private renderUpper() {
    return html`<svg viewBox="0 68 1787 730">
      ${[26, 24, 22, 20, 18].map((p) => {
        const y = 480 - (p - 20) * 53.2;
        return svg`<path d="M0 ${y}H1711" stroke="#8a0000" stroke-width="1.300" stroke-dasharray="2 5"/>`;
      })}
      <path d="M0 693.500H537M1621 693.500H1711" stroke="#8a0000" stroke-width="1.300" stroke-dasharray="2 5"/>
      ${this.renderCandles()}
      <polyline points="${ma60}" fill="none" stroke="#00d800" stroke-width="1.400"/>
      <polyline points="${ma20}" fill="none" stroke="#d000d0" stroke-width="1.300"/>
      <polyline points="${ma10}" fill="none" stroke="#d8d800" stroke-width="1.300"/>
      <polyline points="${ma5}" fill="none" stroke="#dcdcdc" stroke-width="1.200"/>
      <rect x="537" y="644" width="1084" height="109" fill="#000" fill-opacity=".97"/>
      <path d="M1711 68V798" stroke="#b00000" stroke-width="1.500"/>
      ${upAxis.map((p) => {
        const y = 480 - (p - 20) * 53.2;
        return svg`<path d="M1711 ${y}h9" stroke="#b00000" stroke-width="1.500"/>
          <text x="1778" y="${y + 7}" text-anchor="end" font-size="18.500" fill="#c82020" font-family="Liberation Sans">${p}.00</text>`;
      })}
      <path d="M415 100 432 106M418 98V104" stroke="#bbb" stroke-width="1.200" fill="none"/>
      <text x="438" y="113" font-size="17.500" fill="#b8b8b8" font-family="Liberation Sans">27.18</text>
      <path d="M1369 766H1386M1369 766l6-4M1369 766l6 4" stroke="#bbb" stroke-width="1.200" fill="none"/>
      <text x="1389" y="773" font-size="17.500" fill="#b8b8b8" font-family="Liberation Sans">14.60</text>
      <rect x="394" y="776" width="19" height="19" fill="#a85a10"/>
      <text x="403.500" y="792" text-anchor="middle" font-size="16" fill="#eee" font-family="Noto Sans CJK SC">榜</text>
      <rect x="1101" y="776" width="19" height="19" fill="#b81818"/>
      <text x="1110.500" y="792" text-anchor="middle" font-size="16" fill="#eee" font-family="Noto Sans CJK SC">涨</text>
      <rect x="1371" y="776" width="19" height="19" fill="#1c5a9a"/>
      <text x="1380.500" y="792" text-anchor="middle" font-size="16" fill="#eee" font-family="Noto Sans CJK SC">财</text>
      <path d="M1670 75l6 7-6 7-6-7z" fill="none" stroke="#999" stroke-width="1.200"/>
      <rect x="1690" y="75" width="13" height="14" rx="2" fill="none" stroke="#888" stroke-width="1.500"/>
      <rect x="1697" y="77" width="5" height="10" fill="#aaa"/>
    </svg>`;
  }

  private renderLower() {
    const lines = [];
    for (let i = 1; i < bars.length; i++) {
      const a = bars[i - 1], b = bars[i];
      lines.push(svg`<path d="M${a.x} ${a.top}L${b.x} ${b.top}" stroke="${b.red ? "#e80000" : "#00d000"}" stroke-width="1.300" fill="none"/>`);
    }
    return html`<svg viewBox="0 798 1787 483">
      ${[871, 922, 972, 1023, 1072, 1123, 1173, 1223].map((y) => svg`<path d="M0 ${y}H1711" stroke="#8a0000" stroke-width="1.300" stroke-dasharray="2 5"/>`)}
      <path d="M4 1274H14" stroke="#e00000" stroke-width="1.600"/><path d="M14 1274H55" stroke="#00c000" stroke-width="1.600"/>
      <path d="M55 1274H100" stroke="#900000" stroke-width="1.600"/><path d="M100 1274H262" stroke="#00c000" stroke-width="1.600"/>
      <path d="M1390 1274H1472" stroke="#00c000" stroke-width="1.600"/>
      ${bars.map((b) => b.red
        ? svg`<rect x="${b.x - 2}" y="${b.top}" width="${b.x > 330 ? 4.5 : 3}" height="${BASE - b.top}" fill="#ff0000" shape-rendering="crispEdges"/>`
        : svg`<rect x="${b.x - 2}" y="${b.top}" width="4" height="${BASE - b.top}" fill="none" stroke="#00d000" stroke-width="1.500" shape-rendering="crispEdges"/>`)}
      ${lines}
      <path d="M1711 798V1281" stroke="#b00000" stroke-width="1.500"/>
      <path d="M1711 799H1787" stroke="#c00000" stroke-width="2"/>
      ${lowAxis.map(([t, y]) => svg`<path d="M1711 ${y}h9" stroke="#b00000" stroke-width="1.500"/>
        <text x="1778" y="${y + 7}" text-anchor="end" font-size="18.500" fill="#c82020" font-family="Liberation Sans">${t}</text>`)}
      <path d="M1711 922h9" stroke="#b00000" stroke-width="1.500"/>
      <rect x="1712" y="912" width="75" height="21" fill="#00008c"/>
      <text x="1740" y="928" text-anchor="middle" font-size="17.500" fill="#cfcfcf" font-family="Liberation Sans">135.13</text>
    </svg>`;
  }

  private renderAxis() {
    const tickX = [180, 255, 329, 478, 553, 700, 775, 990, 1065, 1140, 1213, 1290, 1365, 1440, 1515, 1590, 1665];
    return html`<svg viewBox="0 0 1787 22">
      ${tickX.map((x) => svg`<path d="M${x} 0v3" stroke="#b00000" stroke-width="1.500"/>`)}
      <text x="7" y="18" font-size="18" fill="#e02020" font-family="Liberation Sans, Noto Sans CJK SC">2021年</text>
      <path d="M107 0V22M403 0V22M647 0V22M1711 0V22" stroke="#b00000" stroke-width="1.500"/>
      <text x="110" y="18" font-size="18" fill="#e02020" font-family="Liberation Sans">12</text>
      <text x="405" y="18" font-size="18" fill="#e02020" font-family="Liberation Sans">1</text>
      <text x="650" y="18" font-size="18" fill="#e02020" font-family="Liberation Sans">2</text>
      <rect x="846" y="0" width="116" height="22" fill="#00008c"/>
      <text x="848" y="18" font-size="17.500" fill="#c8c8e0" font-family="Liberation Sans, Noto Sans CJK SC">2022/02/28/一</text>
    </svg>`;
  }

  private renderPanel() {
    const stat = (a: string, v: string, cv: string, b: string, v2: string, c2: string, u2 = "") => html`<div class="stat">
      <span class="lab">${a}</span><span class="v ${cv}">${v}</span><span class="sp"></span>
      <span class="lab">${b}</span><span class="v2 ${c2}">${v2}${u2 ? html`<span class="wan">${u2}</span>` : ""}</span></div>`;
    const flow = (lab: string, bc: string, v: string, u: string, p: string) => html`<div class="flow">
      <span class="lab">${lab}</span><span class="sp"><div class="fb ${bc}"></div></span>
      <span class="r">${v}<span class="wan">${u}</span></span><span class="r">${p}</span></div>`;
    const ord = (r: string[], i: number, yen = false) => html`<div class="ord">
      <span class="lab">${r[0]}${yen && i === 0 ? html`<span class="yen">￥</span>` : ""}</span>
      <span class="pr">${r[1]}</span><span class="vol">${r[2]}<span class="wan">万</span></span></div>`;
    return html`<div class="panel">
      <div class="nm-row"><span class="big-nm">太极集团</span><span class="code">600129</span><span class="rr">R</span></div>
      <div class="px-row"><span>20.53</span><span>▲0.52</span><span>2.60%</span></div>
      <div class="orders sell">${sells.map((r, i) => ord(r, i, true))}</div>
      <div class="split"><i></i><b></b></div>
      <div class="orders">${buys.map((r, i) => ord(r, i))}</div>
      <div class="sec s5">
        ${stat("今开", "19.98", "green", "均价", "20.43", "redt")}
        ${stat("最高", "20.82", "redt", "量比", "1.02", "redt")}
        ${stat("最低", "19.83", "green", "市值", "114.3", "gry", "亿")}
        ${stat("现量", "1095", "pur", "总量", "72455", "gry")}
        ${stat("外盘", "40402", "redt", "内盘", "32053", "green")}
      </div>
      <div class="sec s3">
        ${stat("换手", "1.30%", "gry", "股本", "5.57", "gry", "亿")}
        ${stat("净资", "4.93", "gry", "流通", "5.57", "gry", "亿")}
        <div class="stat"><span class="lab">收益(一)</span><span class="v gry">0.040</span><span class="sp"></span><span class="ppe">PE(动)</span><span class="v2 gry">143.5</span></div>
      </div>
      <div class="sec s4">
        ${flow("净流入额", "a", "1721", "万", "12%")}
        ${flow("大宗流入", "b", "479.0", "万", "3%")}
        ${flow("5日净流入额", "c", "9920", "万", "13%")}
        ${flow("5日大宗流入", "d", "2433", "万", "3%")}
      </div>
      <div class="sec ticks">
        ${ticks.map((t) => html`<div class="tick"><span class="t">${t[0]}</span><span class="p">${t[1]}</span>
          <span class="vl">${t[2]}<span class="wan">万</span></span><span class="sd ${t[3]}">${t[3]}</span><span class="n">${t[4]}</span></div>`)}
      </div>
    </div>`;
  }

  private renderRail() {
    return html`<div class="rail">
      ${icons.map((i) => html`<div class="cell">${i}</div>`)}
      <div class="sep"><i></i></div>
      ${icons2.map((i) => html`<div class="cell">${i}</div>`)}
      <div class="sep"><i></i></div>
      ${icons3.map((i) => html`<div class="cell">${i}</div>`)}
      ${periods.map((p) => html`<div class="per ${p === "日" ? "sel" : ""}">${p}</div>`)}
    </div>`;
  }

  render() {
    return html`
      <div class="titlebar">
        <div class="logo"><svg viewBox="0 0 28 27"><rect width="28" height="27" fill="#e02428"/><path d="M23 3c-4 0-9 3-11 8l4 0-9 12c1-5 2-8 3-10l-4 0C9 8 14 3 23 3z" fill="#fff"/><path d="M24 7c-1 6-5 12-11 15h-3l5-6h5z" fill="#fff"/></svg></div>
        <div class="brand">通达信金融终端</div>
        <div class="menu">
          <span>行情</span><span>市场</span><span>资讯</span><span>数据</span><span>专题</span><span>发现<i class="dot"></i></span><span>交易</span><span>行业</span><span>热点</span><span>L1L2</span>
        </div>
        <div class="notice">交易未登录</div>
        <div class="notice2">太极集团</div>
        <div class="sys"><span>功能</span><span>版面</span><span>公式</span><span>选项</span><span>帮助</span></div>
        <div class="clock"><span>20:20:07</span><span>周一</span></div>
        <div class="win">
          <svg viewBox="0 0 18 18"><path d="M12 2 6 9l6 7" fill="none" stroke="#333" stroke-width="2.200"/></svg>
          <svg viewBox="0 0 18 18"><path d="M4 9h10" stroke="#333" stroke-width="2.500"/></svg>
          <svg viewBox="0 0 18 18"><path d="M6 5V2h10v11h-3" fill="none" stroke="#333" stroke-width="2"/><rect x="2.500" y="5.500" width="10" height="11" fill="none" stroke="#333" stroke-width="2.500"/></svg>
          <svg viewBox="0 0 18 18"><path d="M3 2l12 14M15 2 3 16" stroke="#333" stroke-width="2"/></svg>
        </div>
      </div>
      <div class="body">
        <div class="left">
          <div class="tools">
            <div class="tool-ic"><svg viewBox="0 0 18 18"><rect x="1.500" y="1.500" width="15" height="15" rx="2" fill="none" stroke="#999" stroke-width="1.500"/><rect x="10" y="3.500" width="5" height="11" fill="#ccc"/></svg></div>
            <div class="periods">
              <span>分时</span><span>1分钟</span><span>5分钟</span><span>15分钟</span><span>30分钟</span><span>60分钟</span><span class="on">日线</span><span>周线</span><span>月线</span><span>多周期</span><span>更多<span class="gt">&gt;</span></span>
            </div>
            <div class="right-tools"><span>复权</span><span>叠加</span><span>统计</span><span>画线</span><span>F10</span><span>标记</span><span>-自选</span><span>返回</span></div>
          </div>
          <div class="upper">
            ${this.renderUpper()}
            <div class="legend">
              <span class="nm">太极集团(日线)</span>${chev}
              <span class="m5">MA5: 19.93${up("#ff2020")}</span>
              <span class="m10">MA10: 19.26${up("#ff2020")}</span>
              <span class="m20">MA20: 18.89${up("#ff2020")}</span>
              <span class="m60">MA60: 19.03${down}</span>
            </div>
          </div>
          <div class="lower">
            ${this.renderLower()}
            <div class="legend2">${chev}<span class="n2">红柱吃肉</span>
              <span class="g">绿柱持币:<span class="vv">2.44</span>${up("#ff2020")}</span>
              <span class="rd">红柱持股:<span class="vv">2.44</span>${up("#ff2020")}</span>
            </div>
            <div class="site">GSZX.COM.CN</div>
          </div>
          <div class="axis">${this.renderAxis()}</div>
          <div class="tabs t1"><span>指标</span><span>窗口</span><span>MACD</span><span>VOL-TDX</span><span>CCI</span><span>趋势动力</span><span>主力监控</span><span>私募主图</span><span>MA2</span><span>测试主图</span><span>测试幅图A</span><span>测试幅图B</span><span>更多</span><span class="cy">设置</span></div>
          <div class="tabs t2"><span>扩展∧</span><span>关联报价</span><span>资金分布</span><span class="gold">综合资讯</span><span class="gold">行业资讯</span><span class="gold">互动问答</span><span>新用户福利专享</span></div>
        </div>
        ${this.renderPanel()}
        ${this.renderRail()}
      </div>
      <div class="status">
        <span class="sq-wrap"><i class="sq"></i></span><span class="st-n">上证</span><span>3236.37</span><span>40.91</span><span>1.28%</span><span class="st-k">5173<span class="wa">亿</span></span>
        <span class="st-n">沪深</span><span>4166.08</span><span>76.52</span><span>1.87%</span><span class="st-k">3241<span class="wa">亿</span></span>
        <span class="st-n">创业</span><span>2554.66</span><span>96.40</span>
      </div>
      <div class="wm">
        <div class="wm-t">公式指标网</div>
        <svg viewBox="0 0 108 108">
          <path d="M5 50A50 50 0 0 1 37 7" fill="none" stroke="#d8624e" stroke-width="9"/>
          <path d="M71 7A50 50 0 0 1 103 50" fill="none" stroke="#d8624e" stroke-width="9"/>
          <path d="M107.500 57A54 54 0 0 1 64 107L62 98A45 45 0 0 0 98 57z" fill="#e8c848"/>
          <path d="M45 0h18v16l9 6v26H62v6h12v34H64v20H44V88H33V54h13v-6H36V22l9-6z" fill="#e8c848"/>
          <circle cx="54" cy="7" r="3" fill="#7fabd9"/>
          <path d="M40 30h28M54 22v24M44 34l-3 10M64 34l3 10M38 64h32M38 76h32M54 57v30M48 78l-9 8M60 78l9 8" stroke="#d89030" stroke-width="3.500" fill="none"/>
          <defs><path id="wmArc" d="M6 60A49 49 0 0 0 42 104"/></defs>
          <text font-size="9" fill="#fff" font-family="Liberation Sans"><textPath href="#wmArc">www.9m8.cn</textPath></text>
        </svg>
        <div class="wm-u">www.9m8.cn</div>
      </div>
    `;
  }
}
